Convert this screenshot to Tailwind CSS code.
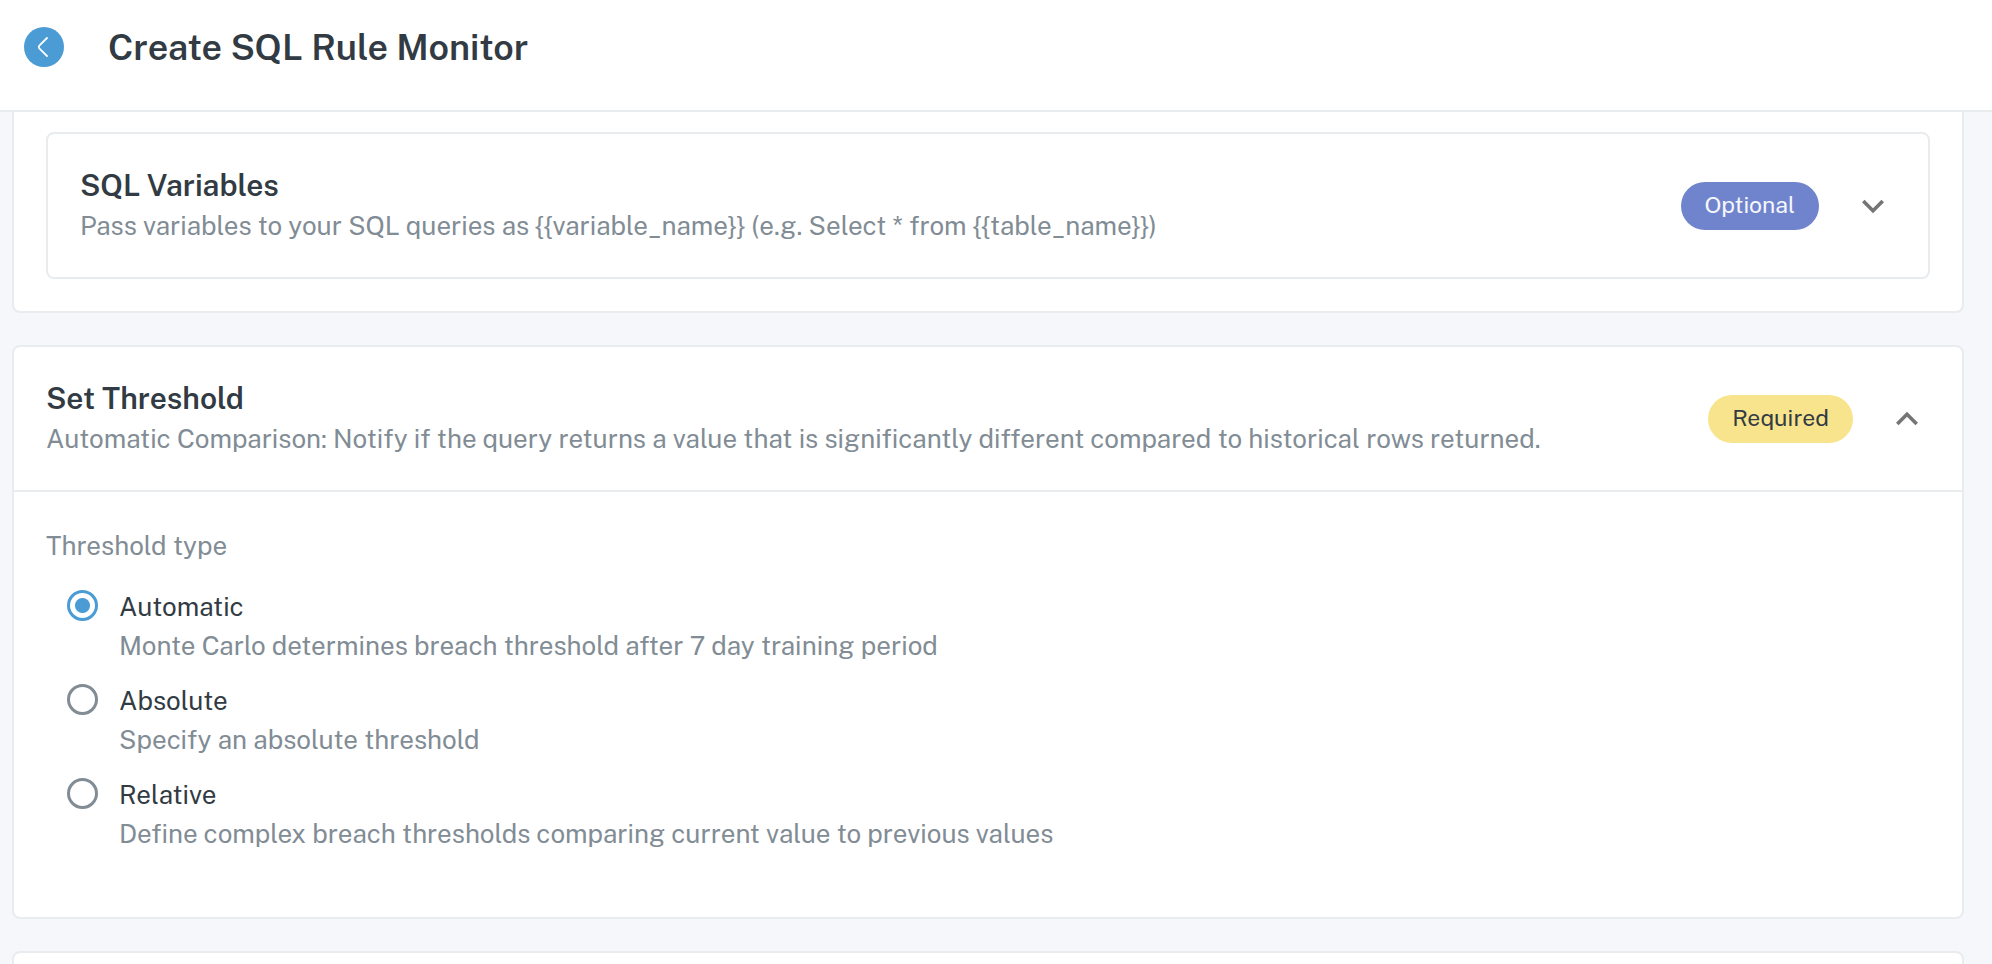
<!DOCTYPE html>
<html lang="en">
<head>
  <meta charset="UTF-8" />
  <meta name="viewport" content="width=device-width, initial-scale=1.0" />
  <title>Create SQL Rule Monitor</title>
  <script src="https://cdn.jsdelivr.net/npm/@tailwindcss/browser@4"></script>
</head>
<body class="h-screen overflow-hidden flex flex-col bg-[#f5f7fb] font-['Public_Sans','Inter',sans-serif] text-[26px] leading-[39px] text-[#323b43]">

  <header class="shrink-0 flex items-start gap-11 bg-white border-b-2 border-[#e8ecef] px-6 pt-[27px] pb-[43px]">
    <button type="button" aria-label="Back" class="size-10 rounded-full bg-[#4b9bd4] flex items-center justify-center">
      <svg class="size-10" viewBox="0 0 40 40" fill="none" stroke="#fff" stroke-width="1.800" stroke-linecap="round" stroke-linejoin="round">
        <path d="M23 11L15.300 18.700Q14.200 20 15.300 21.300L23 29" />
      </svg>
    </button>
    <h1 class="text-4xl leading-10 font-semibold">Create SQL Rule Monitor</h1>
  </header>

  <main class="flex-1 min-h-0 overflow-hidden flex flex-col gap-8 pl-3 pr-7">

    <section class="shrink-0 bg-white border-2 border-t-0 border-[#e8ecef] rounded-b-lg px-8 pt-5 pb-8">
      <div class="flex items-center justify-between border-2 border-[#e8ecef] rounded-lg py-8 pl-8 pr-[33px]">
        <div>
          <h2 class="mb-0.5 text-3xl leading-[38px] font-semibold">SQL Variables</h2>
          <p class="text-[#818c95]">Pass variables to your SQL queries as {{variable_name}} (e.g. Select * from {{table_name}})</p>
        </div>
        <div class="flex items-center gap-8">
          <span class="h-12 px-6 rounded-full bg-[#7084ce] text-[#f5f7fb] text-[23px] leading-[46px]">Optional</span>
          <button type="button" aria-label="Expand SQL Variables" class="size-11">
            <svg class="size-11" viewBox="0 0 24 24" fill="#757575">
              <path d="M16.59 8.59L12 13.17 7.41 8.59 6 10l6 6 6-6z" />
            </svg>
          </button>
        </div>
      </div>
    </section>

    <section class="shrink-0 bg-white border-2 border-[#e8ecef] rounded-lg">
      <div class="flex items-center justify-between border-b-2 border-[#e8ecef] py-8 pl-8 pr-[33px]">
        <div>
          <h2 class="mb-0.5 text-3xl leading-[38px] font-semibold">Set Threshold</h2>
          <p class="text-[#818c95]">Automatic Comparison: Notify if the query returns a value that is significantly different compared to historical rows returned.</p>
        </div>
        <div class="flex items-center gap-8">
          <span class="h-12 px-6 rounded-full bg-[#f8e48c] text-[23px] leading-[46px]">Required</span>
          <button type="button" aria-label="Collapse Set Threshold" class="size-11">
            <svg class="size-11" viewBox="0 0 24 24" fill="#757575">
              <path d="M12 8l-6 6 1.410 1.410L12 10.830l4.590 4.580L18 14z" />
            </svg>
          </button>
        </div>
      </div>

      <fieldset class="px-8 pt-[34px] pb-16">
        <legend class="float-left w-full mb-[22px] text-[#818c95]">Threshold type</legend>
        <div class="clear-both flex flex-col gap-4 pl-[21px]">
          <div class="flex items-start gap-[21px]">
            <input type="radio" id="automatic" name="threshold" checked class="appearance-none shrink-0 size-[31px] mt-[3px] rounded-full border-3 border-[#818c95] checked:border-[#4b9bd4] checked:bg-[radial-gradient(circle,#4b9bd4_7px,transparent_8px)]" />
            <label for="automatic">Automatic<span class="block text-[#818c95]">Monte Carlo determines breach threshold after 7 day training period</span></label>
          </div>
          <div class="flex items-start gap-[21px]">
            <input type="radio" id="absolute" name="threshold" class="appearance-none shrink-0 size-[31px] mt-[3px] rounded-full border-3 border-[#818c95] checked:border-[#4b9bd4] checked:bg-[radial-gradient(circle,#4b9bd4_7px,transparent_8px)]" />
            <label for="absolute">Absolute<span class="block text-[#818c95]">Specify an absolute threshold</span></label>
          </div>
          <div class="flex items-start gap-[21px]">
            <input type="radio" id="relative" name="threshold" class="appearance-none shrink-0 size-[31px] mt-[3px] rounded-full border-3 border-[#818c95] checked:border-[#4b9bd4] checked:bg-[radial-gradient(circle,#4b9bd4_7px,transparent_8px)]" />
            <label for="relative">Relative<span class="block text-[#818c95]">Define complex breach thresholds comparing current value to previous values</span></label>
          </div>
        </div>
      </fieldset>
    </section>

    <section class="shrink-0 h-36 bg-white border-2 border-[#e8ecef] rounded-lg"></section>
  </main>

</body>
</html>
